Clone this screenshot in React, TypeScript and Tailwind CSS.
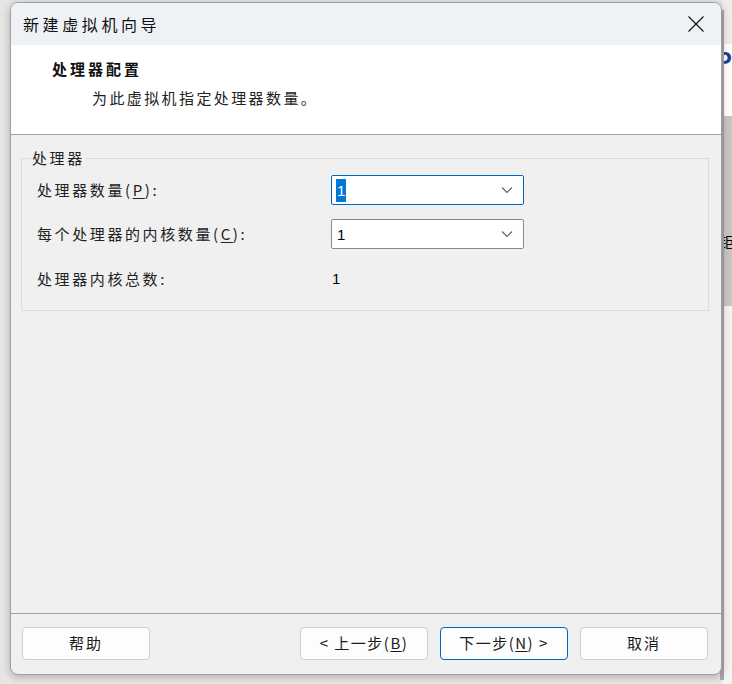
import React from "react";

const font = { fontFamily: '"Noto Sans CJK SC", "Microsoft YaHei", sans-serif' };

function Chevron() {
  return (
    <svg width="12" height="8" viewBox="0 0 12 8" className="shrink-0">
      <path d="M1 1.5 L6 6.5 L11 1.5" fill="none" stroke="#606060" strokeWidth="1.1" />
    </svg>
  );
}

function Btn({ children, primary }: { children: React.ReactNode; primary?: boolean }) {
  return (
    <div
      className={
        "w-[128px] h-[33px] rounded-[4px] flex items-center justify-center text-[15px] tracking-[2px] text-[#1a1a1a] bg-[#fdfdfd] border " +
        (primary ? "border-[#0067c0]" : "border-[#d0d0d0]")
      }
    >
      {children}
    </div>
  );
}

export default function App() {
  return (
    <div className="relative w-[732px] h-[684px] overflow-hidden bg-[#e6e6e6]" style={font}>
      {/* desktop fragments behind the dialog on the right */}
      <div className="absolute left-[722px] top-0 w-[10px] h-[44px] bg-[#ededed]" />
      <div className="absolute left-[722px] top-[44px] w-[10px] h-[72px] bg-white overflow-hidden">
        <span className="absolute left-[-6px] top-[4px] text-[24px] text-[#1f3f8f] font-bold leading-none">P</span>
      </div>
      <div className="absolute left-[722px] top-[116px] w-[10px] h-[190px] bg-[#c6c6c6] overflow-hidden">
        <span className="absolute left-[-3px] top-[118px] text-[15px] text-black leading-none">钜</span>
      </div>
      <div className="absolute left-[722px] top-[306px] w-[10px] h-[378px] bg-[#f3f3f3]" />
      <div className="absolute left-[720px] top-[10px] w-[4px] h-[670px] bg-[#a8a8a8]" />

      {/* dialog window */}
      <div className="absolute left-[10px] top-[2px] w-[712px] h-[673px] rounded-[8px] border border-[#a0a0a0] bg-[#f0f0f0] overflow-hidden flex flex-col shadow-[0_2px_8px_rgba(0,0,0,0.25)]">
        {/* title bar */}
        <div className="h-[42px] shrink-0 bg-[#eef2f7] flex items-center justify-between pl-[12px] pr-[16px]">
          <span className="text-[16px] tracking-[3.6px] text-[#111]">新建虚拟机向导</span>
          <svg width="18" height="18" viewBox="0 0 18 18">
            <path d="M1.5 1.5 L16.5 16.5 M16.5 1.5 L1.5 16.5" stroke="#1a1a1a" strokeWidth="1.3" />
          </svg>
        </div>
        {/* header */}
        <div className="h-[90px] shrink-0 bg-white flex flex-col pl-[41px] pt-[13px] border-b border-[#a0a0a0]">
          <span className="text-[15px] font-bold tracking-[3px] text-[#111] leading-[22px]">处理器配置</span>
          <span className="text-[15px] tracking-[2.4px] text-[#222] leading-[22px] mt-[7px] pl-[40px]">为此虚拟机指定处理器数量。</span>
        </div>
        {/* body */}
        <div className="flex-1 border-b border-[#a0a0a0] pl-[10px] pr-[12px] pt-[23px]">
          <div className="relative border border-[#dcdcdc] h-[153px] pt-[16px] pl-[15px]">
            <span className="absolute left-[9px] top-[-11px] bg-[#f0f0f0] px-[1px] text-[15px] tracking-[2.6px] text-[#222] leading-[20px]">处理器</span>
            <div className="flex flex-col">
              <div className="flex items-center h-[30px]">
                <span className="w-[294px] text-[15px] tracking-[2.6px] text-[#222]">
                  处理器数量(<span className="underline underline-offset-2">P</span>):
                </span>
                <div className="w-[193px] h-[30px] bg-white border border-[#0067c0] rounded-[2px] flex items-center justify-between pl-[4px] pr-[10px]">
                  <span className="bg-[#0078d7] text-white text-[15px] leading-[23px] px-[1px] font-['Liberation_Sans',sans-serif]">1</span>
                  <Chevron />
                </div>
              </div>
              <div className="flex items-center h-[30px] mt-[14px]">
                <span className="w-[294px] text-[15px] tracking-[2.6px] text-[#222]">
                  每个处理器的内核数量(<span className="underline underline-offset-2">C</span>):
                </span>
                <div className="w-[193px] h-[30px] bg-white border border-[#8a8a8a] rounded-[2px] flex items-center justify-between pl-[5px] pr-[10px]">
                  <span className="text-black text-[15px] leading-[23px] font-['Liberation_Sans',sans-serif]">1</span>
                  <Chevron />
                </div>
              </div>
              <div className="flex items-center h-[30px] mt-[15px]">
                <span className="w-[295px] text-[15px] tracking-[2.6px] text-[#222]">处理器内核总数:</span>
                <span className="text-black text-[15px] font-['Liberation_Sans',sans-serif]">1</span>
              </div>
            </div>
          </div>
        </div>
        {/* footer */}
        <div className="h-[60px] shrink-0 flex items-start pt-[13px] pl-[11px] pr-[13px]">
          <Btn>帮助</Btn>
          <div className="flex-1" />
          <Btn>
            <span className="tracking-[1.5px]">&lt; 上一步(<span className="underline underline-offset-2">B</span>)</span>
          </Btn>
          <div className="w-[12px]" />
          <Btn primary>
            <span className="tracking-[1.5px]">下一步(<span className="underline underline-offset-2">N</span>) &gt;</span>
          </Btn>
          <div className="w-[12px]" />
          <Btn>取消</Btn>
        </div>
      </div>
    </div>
  );
}
